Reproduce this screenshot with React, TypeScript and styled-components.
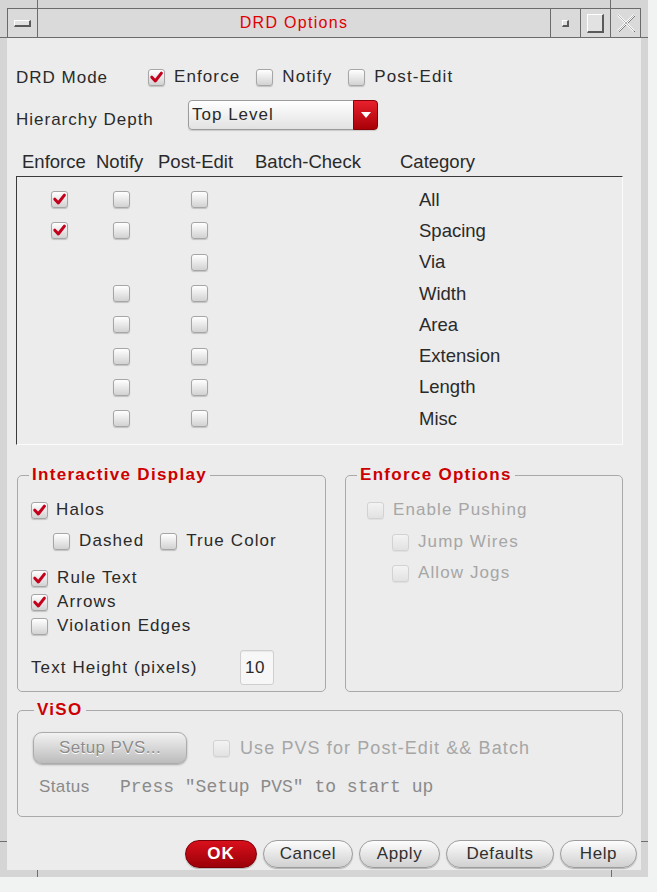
import React from "react";
import styled, { createGlobalStyle } from "styled-components";

const GlobalStyle = createGlobalStyle`
  html, body { margin: 0; padding: 0; background: #f1f3f3; }
  body { font-family: "Liberation Sans", Arial, sans-serif; color: #2a2a2a; }
  * { box-sizing: border-box; }
`;

const Desktop = styled.div`
  width: 657px;
  height: 892px;
  background: #f1f3f3;
  overflow: hidden;
`;

const Window = styled.div`
  position: relative;
  width: 648px;
  height: 877px;
  background: #d5d5d5;
  padding: 8px 7px 7px 7px;
  display: flex;
  flex-direction: column;
`;

const Tick = styled.span<{ $x: number; $y: number; $w: number; $h: number }>`
  position: absolute;
  left: ${(p) => p.$x}px;
  top: ${(p) => p.$y}px;
  width: ${(p) => p.$w}px;
  height: ${(p) => p.$h}px;
  background: #6e6e6e;
`;

const TitleBar = styled.div`
  height: 30px;
  flex: none;
  display: flex;
  border: 1px solid #6b6b6b;
  background: #dadada;
`;

const TitleButton = styled.div<{ $side: "left" | "right" }>`
  width: 30px;
  flex: none;
  display: flex;
  align-items: center;
  justify-content: center;
  ${(p) => (p.$side === "left" ? "border-right: 1px solid #6b6b6b;" : "border-left: 1px solid #6b6b6b;")}
`;

const Raised = styled.span<{ $w: number; $h: number }>`
  width: ${(p) => p.$w}px;
  height: ${(p) => p.$h}px;
  background: #e2e2e2;
  border-top: 1px solid #ffffff;
  border-left: 1px solid #ffffff;
  border-right: 2px solid #5a5a5a;
  border-bottom: 2px solid #5a5a5a;
`;

const TitleText = styled.div`
  flex: 1;
  display: flex;
  align-items: center;
  justify-content: center;
  font-size: 16px;
  letter-spacing: 1.3px;
  color: #e00000;
`;

const Content = styled.div`
  flex: 1;
  background: #ececec;
  padding: 0 18px 0 9px;
  display: flex;
  flex-direction: column;
`;

const FormRow = styled.div<{ $top: number }>`
  margin-top: ${(p) => p.$top}px;
  height: 30px;
  display: flex;
  align-items: center;
`;

const RowLabel = styled.div<{ $w: number; $drop?: number }>`
  width: ${(p) => p.$w}px;
  flex: none;
  font-size: 17px;
  letter-spacing: 1px;
  padding-top: ${(p) => p.$drop ?? 0}px;
`;

const CheckLabel = styled.div<{ $gap?: number; $disabled?: boolean; $indent?: number; $size?: number }>`
  display: inline-flex;
  align-items: center;
  gap: ${(p) => p.$gap ?? 9}px;
  margin-left: ${(p) => p.$indent ?? 0}px;
  font-size: ${(p) => p.$size ?? 17}px;
  letter-spacing: 1.1px;
  white-space: nowrap;
  color: ${(p) => (p.$disabled ? "#a6a6a6" : "#2a2a2a")};
`;

const ModeItems = styled.div`
  display: flex;
  align-items: center;
  gap: 16px;
  padding-top: 2px;
`;

const Box = styled.span<{ $disabled?: boolean }>`
  width: 17px;
  height: 17px;
  flex: none;
  border: 1px solid ${(p) => (p.$disabled ? "#d2d2d2" : "#a6a6a6")};
  border-radius: 3px;
  background: ${(p) =>
    p.$disabled ? "linear-gradient(#f3f3f3, #e2e2e2)" : "linear-gradient(#ffffff, #d2d2d2)"};
  box-shadow: 0 1px 1px rgba(0, 0, 0, ${(p) => (p.$disabled ? 0.06 : 0.18)});
  display: inline-flex;
  align-items: center;
  justify-content: center;
`;

function Checkbox({ checked, disabled }: { checked?: boolean; disabled?: boolean }) {
  return (
    <Box $disabled={disabled}>
      {checked && (
        <svg width="15" height="15" viewBox="0 0 15 15">
          <path
            d="M2.8 7.2 L6.3 11 L12.4 3.2"
            fill="none"
            stroke="#c4001c"
            strokeWidth="3"
            strokeLinecap="round"
            strokeLinejoin="round"
          />
        </svg>
      )}
    </Box>
  );
}

const Dropdown = styled.div`
  width: 190px;
  height: 30px;
  display: flex;
  align-items: stretch;
  border: 1px solid #9c9c9c;
  border-radius: 4px;
  background: linear-gradient(#ffffff, #e2e2e2);
  box-shadow: 0 1px 1px rgba(0, 0, 0, 0.15);
`;

const DropText = styled.div`
  flex: 1;
  padding-left: 3px;
  display: flex;
  align-items: center;
  font-size: 17px;
  letter-spacing: 1px;
`;

const DropArrow = styled.div`
  width: 25px;
  margin: -1px -1px -1px 0;
  border-radius: 0 4px 4px 0;
  background: linear-gradient(#e8202c, #a80008);
  border: 1px solid #8a0008;
  display: flex;
  align-items: center;
  justify-content: center;
`;

const TableHeader = styled.div`
  margin-top: 20px;
  height: 24px;
  padding-left: 6px;
  display: grid;
  grid-template-columns: 74px 62px 97px 145px auto;
  align-items: center;
  font-size: 18.5px;
  color: #2a2a2a;
`;

const Table = styled.div`
  margin-top: 2px;
  height: 269px;
  border-top: 1px solid #3a3a3a;
  border-left: 1px solid #3a3a3a;
  border-right: 1px solid #fbfbfb;
  border-bottom: 1px solid #fbfbfb;
  padding-top: 7px;
`;

const TableRow = styled.div`
  height: 31.3px;
  display: grid;
  grid-template-columns: 84px 40px 116px 162px 1fr;
  align-items: center;
  justify-items: center;
`;

const Cell = styled.div`
  display: flex;
  align-items: center;
  justify-content: center;
`;

const CategoryCell = styled.div`
  justify-self: start;
  font-size: 18.5px;
`;

const GroupRow = styled.div`
  margin-top: 20px;
  height: 227px;
  padding-left: 1px;
  display: flex;
  gap: 19px;
`;

const Group = styled.fieldset<{ $w?: number }>`
  margin: 0;
  min-width: 0;
  ${(p) => (p.$w ? `width: ${p.$w}px;` : "")}
  height: 100%;
  border: 1px solid #a9a9a9;
  border-radius: 5px;
  padding: 13px 8px 0 13px;
  display: flex;
  flex-direction: column;
`;

const Legend = styled.legend<{ $shift?: number }>`
  margin-left: ${(p) => p.$shift ?? -2}px;
  padding: 0 3px;
  font-size: 17px;
  font-weight: bold;
  letter-spacing: 1.3px;
  line-height: 20px;
  color: #cc0000;
`;

const ItemRow = styled.div<{ $top?: number; $h?: number }>`
  margin-top: ${(p) => p.$top ?? 0}px;
  height: ${(p) => p.$h ?? 24}px;
  display: flex;
  align-items: center;
  gap: 16px;
`;

const NumberField = styled.div`
  width: 34px;
  height: 35px;
  margin-left: auto;
  margin-right: 43px;
  border: 1px solid #cfcfcf;
  border-radius: 3px;
  background: #f7f7f7;
  box-shadow: inset 0 1px 1px rgba(0, 0, 0, 0.06);
  display: flex;
  align-items: center;
  padding-left: 4px;
  font-size: 17px;
  letter-spacing: 0.6px;
`;

const PlainLabel = styled.span`
  font-size: 17px;
  letter-spacing: 1.1px;
`;

const VisoGroup = styled(Group)`
  margin: 8px 0 0 1px;
  height: 117px;
  flex: none;
  padding: 12px 14px 0 15px;
`;

const VisoTop = styled.div`
  height: 32px;
  display: flex;
  align-items: center;
  gap: 26px;
`;

const SetupButton = styled.div`
  width: 154px;
  height: 32px;
  border-radius: 9px;
  border: 1px solid #ababab;
  background: linear-gradient(#f2f2f2, #bcbcbc);
  box-shadow: 0 1px 2px rgba(0, 0, 0, 0.3);
  display: flex;
  align-items: center;
  justify-content: center;
  font-size: 17px;
  letter-spacing: 0.4px;
  color: #8c8c8c;
  text-shadow: 0 1px 0 #ffffff;
`;

const StatusRow = styled.div`
  margin-top: 12px;
  height: 22px;
  padding-left: 6px;
  display: flex;
  align-items: center;
  color: #8a8a8a;
`;

const StatusLabel = styled.span`
  width: 81px;
  font-size: 17px;
  letter-spacing: 0.4px;
`;

const Mono = styled.span`
  font-family: "Liberation Mono", "Courier New", monospace;
  font-size: 18px;
  white-space: pre;
`;

const ButtonBar = styled.div`
  margin: 23px -14px 0 0;
  height: 28px;
  display: flex;
  justify-content: flex-end;
  gap: 6px;
`;

const PillButton = styled.div<{ $w: number; $primary?: boolean }>`
  width: ${(p) => p.$w}px;
  height: 28px;
  border-radius: 14px;
  border: 1px solid ${(p) => (p.$primary ? "#7a0008" : "#9d9d9d")};
  background: ${(p) =>
    p.$primary ? "linear-gradient(#d8101c, #9c0008)" : "linear-gradient(#fdfdfd, #d0d0d0)"};
  box-shadow: 0 1px 1px rgba(0, 0, 0, 0.25);
  display: flex;
  align-items: center;
  justify-content: center;
  font-size: 17px;
  letter-spacing: ${(p) => (p.$primary ? 1 : 0.6)}px;
  font-weight: ${(p) => (p.$primary ? "bold" : "normal")};
  color: ${(p) => (p.$primary ? "#ffffff" : "#303030")};
`;

const rows: { name: string; e?: boolean; ec?: boolean; n?: boolean; p?: boolean }[] = [
  { name: "All", e: true, ec: true, n: true, p: true },
  { name: "Spacing", e: true, ec: true, n: true, p: true },
  { name: "Via", p: true },
  { name: "Width", n: true, p: true },
  { name: "Area", n: true, p: true },
  { name: "Extension", n: true, p: true },
  { name: "Length", n: true, p: true },
  { name: "Misc", n: true, p: true },
];

export default function App() {
  return (
    <Desktop>
      <GlobalStyle />
      <Window>
        <Tick $x={37} $y={0} $w={1} $h={8} />
        <Tick $x={610} $y={0} $w={1} $h={8} />
        <Tick $x={0} $y={37} $w={7} $h={1} />
        <Tick $x={641} $y={37} $w={7} $h={1} />
        <Tick $x={0} $y={841} $w={7} $h={1} />
        <Tick $x={641} $y={841} $w={7} $h={1} />
        <Tick $x={37} $y={870} $w={1} $h={7} />
        <Tick $x={611} $y={870} $w={1} $h={7} />
        <TitleBar>
          <TitleButton $side="left">
            <Raised $w={17} $h={7} />
          </TitleButton>
          <TitleText>DRD Options</TitleText>
          <TitleButton $side="right">
            <Raised $w={7} $h={7} />
          </TitleButton>
          <TitleButton $side="right">
            <Raised $w={17} $h={19} />
          </TitleButton>
          <TitleButton $side="right">
            <svg width="22" height="22" viewBox="0 0 22 22">
              <path d="M3 3 L19 19 M19 3 L3 19" stroke="#6a6a6a" strokeWidth="1" transform="translate(1 1)" />
              <path d="M3 3 L19 19 M19 3 L3 19" stroke="#ffffff" strokeWidth="2.2" />
              <path d="M3 3 L19 19 M19 3 L3 19" stroke="#b4b4b4" strokeWidth="1" />
            </svg>
          </TitleButton>
        </TitleBar>
        <Content>
          <FormRow $top={23}>
            <RowLabel $w={132} $drop={3}>
              DRD Mode
            </RowLabel>
            <ModeItems>
              <CheckLabel>
                <Checkbox checked />
                Enforce
              </CheckLabel>
              <CheckLabel>
                <Checkbox />
                Notify
              </CheckLabel>
              <CheckLabel>
                <Checkbox />
                Post-Edit
              </CheckLabel>
            </ModeItems>
          </FormRow>
          <FormRow $top={9}>
            <RowLabel $w={172} $drop={10}>
              Hierarchy Depth
            </RowLabel>
            <Dropdown>
              <DropText>Top Level</DropText>
              <DropArrow>
                <svg width="10" height="6" viewBox="0 0 10 6">
                  <path d="M0 0 L10 0 L5 6 Z" fill="#ffffff" />
                </svg>
              </DropArrow>
            </Dropdown>
          </FormRow>
          <TableHeader>
            <span>Enforce</span>
            <span>Notify</span>
            <span>Post-Edit</span>
            <span>Batch-Check</span>
            <span>Category</span>
          </TableHeader>
          <Table>
            {rows.map((r) => (
              <TableRow key={r.name}>
                <Cell>{r.e && <Checkbox checked={r.ec} />}</Cell>
                <Cell>{r.n && <Checkbox />}</Cell>
                <Cell>{r.p && <Checkbox />}</Cell>
                <Cell />
                <CategoryCell>{r.name}</CategoryCell>
              </TableRow>
            ))}
          </Table>
          <GroupRow>
            <Group $w={309}>
              <Legend>Interactive Display</Legend>
              <ItemRow>
                <CheckLabel $gap={8}>
                  <Checkbox checked />
                  Halos
                </CheckLabel>
              </ItemRow>
              <ItemRow $top={7}>
                <CheckLabel $indent={22}>
                  <Checkbox />
                  Dashed
                </CheckLabel>
                <CheckLabel>
                  <Checkbox />
                  True Color
                </CheckLabel>
              </ItemRow>
              <ItemRow $top={13}>
                <CheckLabel $gap={9}>
                  <Checkbox checked />
                  Rule Text
                </CheckLabel>
              </ItemRow>
              <ItemRow>
                <CheckLabel $gap={9}>
                  <Checkbox checked />
                  Arrows
                </CheckLabel>
              </ItemRow>
              <ItemRow>
                <CheckLabel $gap={9}>
                  <Checkbox />
                  Violation Edges
                </CheckLabel>
              </ItemRow>
              <ItemRow $top={12} $h={35}>
                <PlainLabel>Text Height (pixels)</PlainLabel>
                <NumberField>10</NumberField>
              </ItemRow>
            </Group>
            <Group $w={278}>
              <Legend>Enforce Options</Legend>
              <ItemRow>
                <CheckLabel $indent={8} $disabled>
                  <Checkbox disabled />
                  Enable Pushing
                </CheckLabel>
              </ItemRow>
              <ItemRow $top={8}>
                <CheckLabel $indent={33} $disabled>
                  <Checkbox disabled />
                  Jump Wires
                </CheckLabel>
              </ItemRow>
              <ItemRow $top={7}>
                <CheckLabel $indent={33} $disabled>
                  <Checkbox disabled />
                  Allow Jogs
                </CheckLabel>
              </ItemRow>
            </Group>
          </GroupRow>
          <VisoGroup>
            <Legend $shift={1}>ViSO</Legend>
            <VisoTop>
              <SetupButton>Setup PVS...</SetupButton>
              <CheckLabel $disabled $gap={10} $size={18}>
                <Checkbox disabled />
                Use PVS for Post-Edit &amp;&amp; Batch
              </CheckLabel>
            </VisoTop>
            <StatusRow>
              <StatusLabel>Status</StatusLabel>
              <Mono>Press "Setup PVS" to start up</Mono>
            </StatusRow>
          </VisoGroup>
          <ButtonBar>
            <PillButton $w={72} $primary>
              OK
            </PillButton>
            <PillButton $w={90}>Cancel</PillButton>
            <PillButton $w={81}>Apply</PillButton>
            <PillButton $w={108}>Defaults</PillButton>
            <PillButton $w={77}>Help</PillButton>
          </ButtonBar>
        </Content>
      </Window>
    </Desktop>
  );
}
